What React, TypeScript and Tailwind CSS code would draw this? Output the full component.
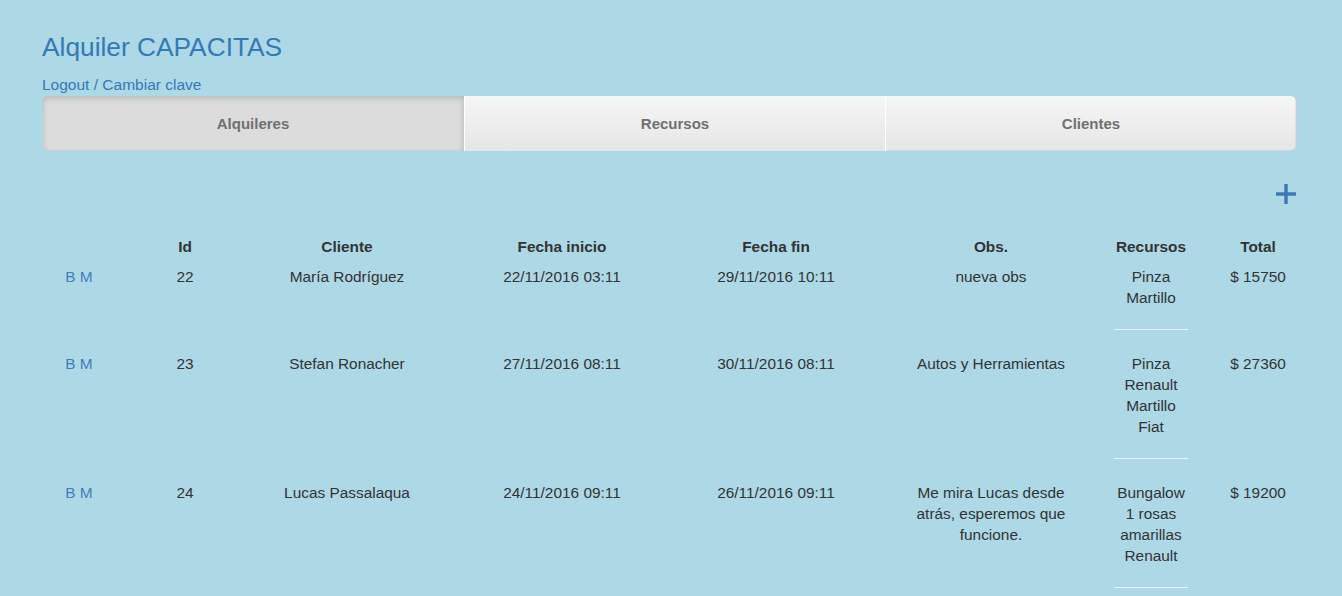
import React from "react";

const rows = [
  {
    id: 22,
    cliente: "María Rodríguez",
    inicio: "22/11/2016 03:11",
    fin: "29/11/2016 10:11",
    obs: "nueva obs",
    recursos: ["Pinza", "Martillo"],
    total: "$ 15750",
  },
  {
    id: 23,
    cliente: "Stefan Ronacher",
    inicio: "27/11/2016 08:11",
    fin: "30/11/2016 08:11",
    obs: "Autos y Herramientas",
    recursos: ["Pinza", "Renault", "Martillo", "Fiat"],
    total: "$ 27360",
  },
  {
    id: 24,
    cliente: "Lucas Passalaqua",
    inicio: "24/11/2016 09:11",
    fin: "26/11/2016 09:11",
    obs: "Me mira Lucas desde atrás, esperemos que funcione.",
    recursos: ["Bungalow", "1 rosas amarillas", "Renault"],
    total: "$ 19200",
  },
];

const grid =
  "grid grid-cols-[74px_138px_186px_244px_184px_246px_74px_140px] text-center";

export default function App() {
  return (
    <div
      className="min-h-[596px] w-full bg-[#add8e6] text-[#333] text-[15.4px] leading-[21px]"
      style={{ fontFamily: '"Liberation Sans", Arial, sans-serif' }}
    >
      <div className="pl-[42px] pt-[32px] w-[1296px]">
        <h1 className="text-[26.3px] leading-[30px] text-[#337ab7] font-normal">
          Alquiler CAPACITAS
        </h1>
        <div className="mt-[12px] leading-[22px] text-[#337ab7] text-[15.5px]">
          <span>Logout</span>
          <span> / </span>
          <span>Cambiar clave</span>
        </div>
        <div className="flex h-[55px] w-[1254px] rounded-[5px] overflow-hidden font-bold text-[#707070] text-[15px]">
          <div className="w-[422px] flex items-center justify-center bg-[#dcdcdc] shadow-[inset_0_2px_6px_rgba(0,0,0,0.18)] rounded-l-[5px]">
            Alquileres
          </div>
          <div className="w-[421px] flex items-center justify-center bg-gradient-to-b from-[#f6f6f6] to-[#e6e6e6] border-l border-white">
            Recursos
          </div>
          <div className="flex-1 flex items-center justify-center bg-gradient-to-b from-[#f6f6f6] to-[#e6e6e6] border-l border-white rounded-r-[5px] shadow-[inset_-1px_-1px_1px_rgba(0,0,0,0.06)]">
            Clientes
          </div>
        </div>
        <div className="flex justify-end mt-[33px] h-[20px]">
          <svg width="20" height="20" viewBox="0 0 20 20">
            <rect x="8.3" y="0" width="3.4" height="20" fill="#3a79b6" />
            <rect x="0" y="8.3" width="20" height="3.4" fill="#3a79b6" />
          </svg>
        </div>
        <div className={`${grid} font-bold mt-[32px]`}>
          <div></div>
          <div>Id</div>
          <div>Cliente</div>
          <div>Fecha inicio</div>
          <div>Fecha fin</div>
          <div>Obs.</div>
          <div>Recursos</div>
          <div>Total</div>
        </div>
        <div className="mt-[9px]">
          {rows.map((r) => (
            <div key={r.id} className={`${grid} pb-[23px] items-start`}>
              <div className="text-[#3f7fbb]">B M</div>
              <div>{r.id}</div>
              <div>{r.cliente}</div>
              <div>{r.inicio}</div>
              <div>{r.fin}</div>
              <div className="flex justify-center">
                <div className="max-w-[172px]">{r.obs}</div>
              </div>
              <div className="flex flex-col items-center">
                <div className="w-[74px]">
                  {r.recursos.map((x) => (
                    <div key={x}>{x}</div>
                  ))}
                </div>
                <div className="w-[74px] mt-[21px] border-t border-[#eef4f6]"></div>
              </div>
              <div>{r.total}</div>
            </div>
          ))}
        </div>
      </div>
    </div>
  );
}
